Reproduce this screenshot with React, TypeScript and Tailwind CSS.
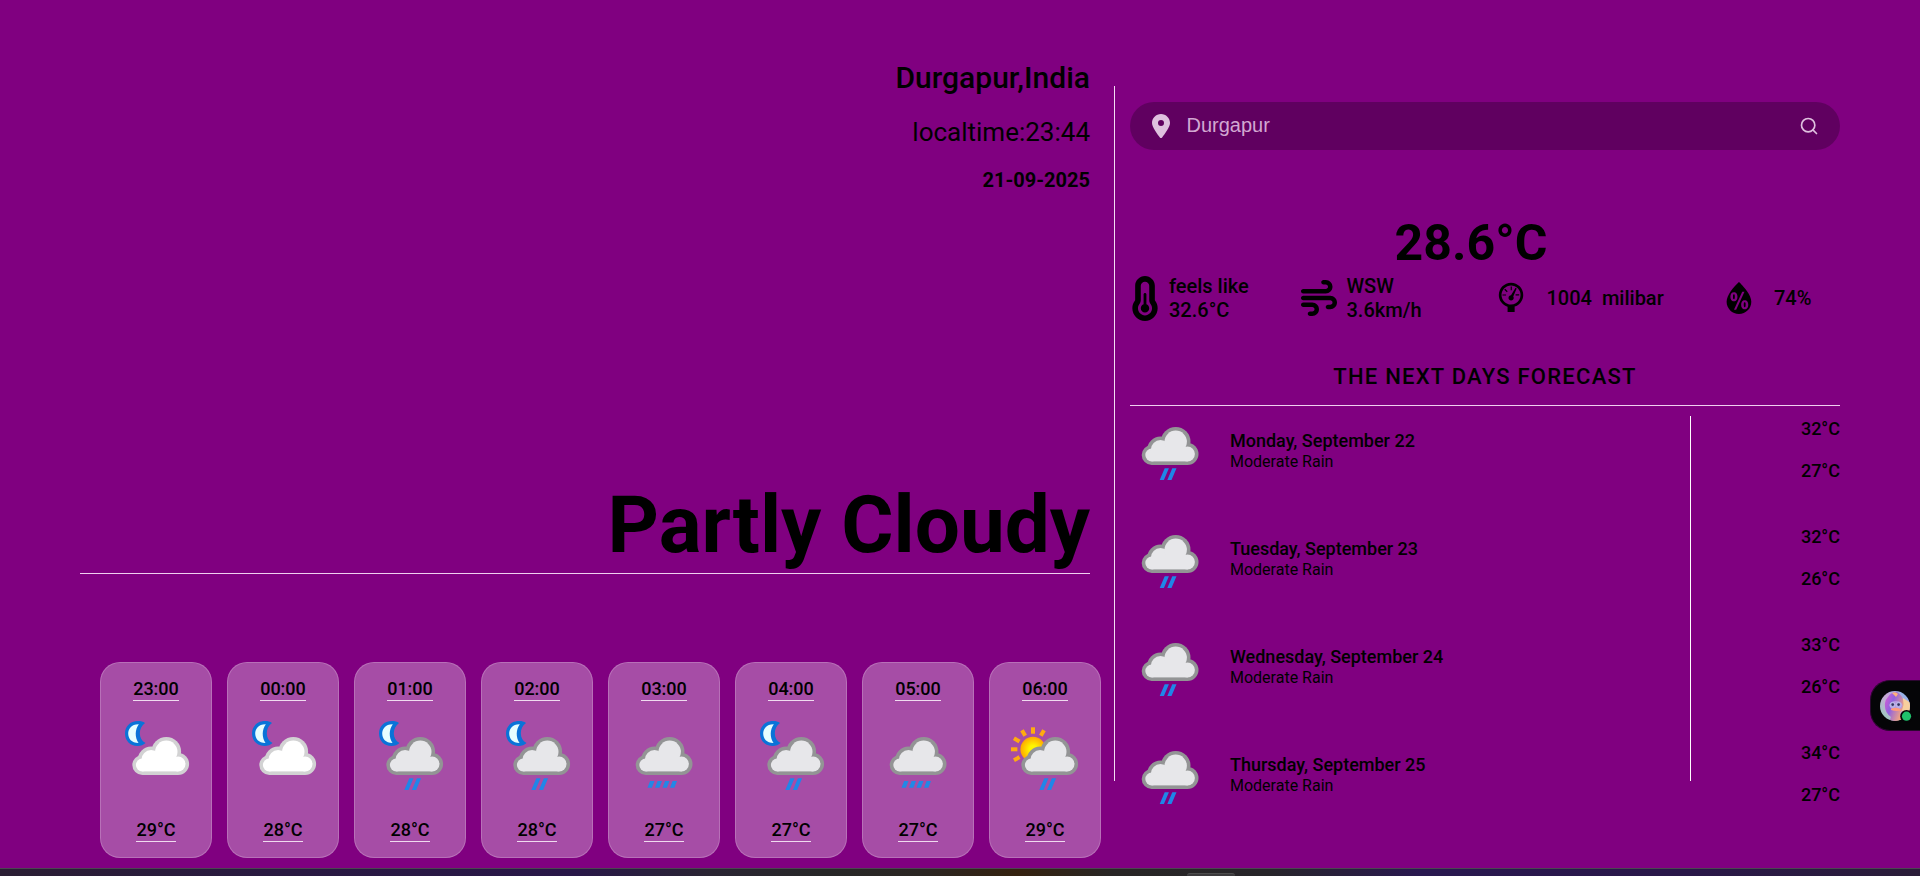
import React from "react";
import { FaLocationDot, FaTemperatureHalf, FaWind } from "react-icons/fa6";
import { WiBarometer, WiHumidity } from "react-icons/wi";
import { Search } from "lucide-react";

type Kind = "night" | "nightRain" | "lightRain" | "rain" | "dayRain";

function CloudShape({ inset, color }: { inset: number; color: string }) {
  return (
    <g fill={color}>
      <circle cx="10" cy="28" r={10 - inset} />
      <circle cx="18.8" cy="22.8" r={13.3 - inset} />
      <circle cx="34" cy="14.8" r={14.8 - inset} />
      <circle cx="45.8" cy="27" r={11 - inset} />
      <rect x="10" y="22" width="36" height={16 - inset} />
    </g>
  );
}

function WeatherIcon({ kind }: { kind: Kind }) {
  const shifted = kind !== "rain" && kind !== "lightRain";
  const clear = kind === "night";
  return (
    <svg width="80" height="72" viewBox="0 0 80 72" aria-hidden="true">
      <defs>
        <radialGradient id="sun">
          <stop offset="0.3" stopColor="#fff500" />
          <stop offset="1" stopColor="#ffa800" />
        </radialGradient>
      </defs>
      {(kind === "night" || kind === "nightRain") && (
        <g>
          <path
            fill="#0a73d8"
            d="M29 3C27 1.5 25 1 22 1C14 1 9 6.5 9 13.5C9 20.5 14 26 21.5 26C25 26 27.5 25 29.5 23C22 19 22 8 29 3Z"
          />
          <path
            fill="#e6feff"
            d="M22.8 4.2C15.5 4 12.2 9 12.2 13.5C12.2 18.5 15.5 23 22.5 23C18.8 17 18.8 10 22.8 4.2Z"
          />
        </g>
      )}
      {kind === "dayRain" && (
        <g>
          {[-120, -90, -60, -30, 0, 30].map((a) => (
            <rect
              key={a}
              x="26"
              y="7.3"
              width="4"
              height="6.4"
              fill="#ffab10"
              transform={`rotate(${a} 28 29.3)`}
            />
          ))}
          <circle cx="28" cy="29.3" r="12.6" fill="url(#sun)" />
        </g>
      )}
      <g transform={shifted ? "translate(16.3 17)" : "translate(11.7 17)"}>
        <CloudShape inset={0} color={clear ? "#d2d2d3" : "#939495"} />
        <CloudShape inset={3.6} color={clear ? "#ffffff" : "#e7e7ea"} />
        {(kind === "nightRain" || kind === "rain" || kind === "dayRain") && (
          <path
            fill="#1f86e8"
            d="M18 53L23 41.3H27.2L22.2 53ZM25.6 53L30.6 41.3H34.8L29.8 53Z"
          />
        )}
        {kind === "lightRain" && (
          <path
            fill="#2288e6"
            d="M11.8 50.7L14.4 44H18.8L16.2 50.7ZM19.3 50.7L21.9 44H26.3L23.7 50.7ZM26.8 50.7L29.4 44H33.8L31.2 50.7ZM34.3 50.7L36.9 44H41.3L38.7 50.7Z"
          />
        )}
      </g>
    </svg>
  );
}

const hours: { time: string; kind: Kind; temp: string }[] = [
  { time: "23:00", kind: "night", temp: "29°C" },
  { time: "00:00", kind: "night", temp: "28°C" },
  { time: "01:00", kind: "nightRain", temp: "28°C" },
  { time: "02:00", kind: "nightRain", temp: "28°C" },
  { time: "03:00", kind: "lightRain", temp: "27°C" },
  { time: "04:00", kind: "nightRain", temp: "27°C" },
  { time: "05:00", kind: "lightRain", temp: "27°C" },
  { time: "06:00", kind: "dayRain", temp: "29°C" },
];

const days = [
  { day: "Monday, September 22", text: "Moderate Rain", max: "32°C", min: "27°C" },
  { day: "Tuesday, September 23", text: "Moderate Rain", max: "32°C", min: "26°C" },
  { day: "Wednesday, September 24", text: "Moderate Rain", max: "33°C", min: "26°C" },
  { day: "Thursday, September 25", text: "Moderate Rain", max: "34°C", min: "27°C" },
];

function CurrentPanel() {
  return (
    <section className="flex w-[1021px] flex-col">
      <div className="flex w-[1010px] flex-col items-end border-b border-[#f0d0f0]">
        <h2 className="mt-[60px] text-[30px] leading-[35px] font-medium">Durgapur,India</h2>
        <p className="mt-[21px] text-[26px] leading-8">localtime:23:44</p>
        <p className="mt-5 text-[20px] leading-6 font-bold">21-09-2025</p>
        <h1 className="mt-[286px] pb-px text-[80px] leading-[94px] font-bold">Partly Cloudy</h1>
      </div>
      <div className="mt-[88px] ml-5 flex gap-[15px]">
        {hours.map((h) => (
          <div
            key={h.time}
            className="flex h-[196px] w-28 flex-col items-center rounded-[20px] border border-white/20 bg-white/30 pt-[15px] text-[18px] leading-[22px] font-medium"
          >
            <span className="border-b border-[#f0dcf0]">{h.time}</span>
            <div className="mt-[19px]">
              <WeatherIcon kind={h.kind} />
            </div>
            <span className="mt-[27px] border-b border-[#f0dcf0]">{h.temp}</span>
          </div>
        ))}
      </div>
    </section>
  );
}

function Metrics() {
  return (
    <div className="flex h-12 items-center text-[20px] leading-6 font-medium">
      <div className="flex w-[169px] items-center">
        <FaTemperatureHalf className="h-[45px] w-[30px]" />
        <p className="ml-[9px]">
          feels like
          <br />
          32.6°C
        </p>
      </div>
      <div className="flex w-[186px] items-center">
        <FaWind className="ml-[2px] size-9" />
        <p className="ml-[9.5px]">
          WSW
          <br />
          3.6km/h
        </p>
      </div>
      <div className="flex w-[216px] items-center">
        <WiBarometer className="ml-px size-[50px]" />
        <p className="ml-[10.5px] whitespace-pre">1004  milibar</p>
      </div>
      <div className="flex items-center">
        <WiHumidity className="ml-[13px] size-[50px]" />
        <p className="ml-[10px]">74%</p>
      </div>
    </div>
  );
}

function ForecastPanel() {
  return (
    <section className="ml-[15px] flex w-[710px] flex-col">
      <div className="mt-[102px] flex h-12 items-center rounded-full bg-black/25 pr-[21px] pl-[22px] text-[#dfc0df]">
        <FaLocationDot className="h-6 w-[18px]" />
        <span className="mb-[2px] ml-[16.5px] grow font-['Liberation_Sans',sans-serif] text-[20px] leading-6 text-[#d2a8d2]">
          Durgapur
        </span>
        <Search className="mb-px size-5" strokeWidth={2} />
      </div>
      <p className="mt-[63px] mr-[28px] text-center text-[50px] leading-[60px] font-bold">28.6°C</p>
      <div className="mt-px">
        <Metrics />
      </div>
      <h3 className="mt-[42px] border-b border-[#f0d0f0] pb-[15px] text-center text-[22px] leading-[26px] font-medium tracking-[1.25px]">
        THE NEXT DAYS FORECAST
      </h3>
      <div className="flex pt-1">
        <ul className="flex w-[560px] flex-col">
          {days.map((d) => (
            <li key={d.day} className="flex h-[108px] items-start">
              <WeatherIcon kind="rain" />
              <div className="mt-5 ml-5">
                <p className="text-[18px] leading-[22px] font-medium">{d.day}</p>
                <p className="text-[16px] leading-[19px]">{d.text}</p>
              </div>
            </li>
          ))}
        </ul>
        <div className="mt-[6px] h-[365px] w-px bg-white" />
        <ul className="flex grow flex-col text-right text-[18px] leading-[21px] font-medium">
          {days.map((d) => (
            <li key={d.day} className="flex h-[108px] flex-col gap-[21px] pt-2">
              <span>{d.max}</span>
              <span>{d.min}</span>
            </li>
          ))}
        </ul>
      </div>
    </section>
  );
}

function AssistantTab() {
  return (
    <div className="absolute top-[680px] right-0 flex h-[51px] w-[50px] items-center rounded-l-[20px] border border-r-0 border-[#2c0630] bg-[#050507] pl-[9px]">
      <svg width="34" height="34" viewBox="0 0 34 34" aria-hidden="true">
        <defs>
          <linearGradient id="sky" x1="0" y1="1" x2="1" y2="0">
            <stop offset="0" stopColor="#8fd6b8" />
            <stop offset="0.5" stopColor="#c9a6d8" />
            <stop offset="0.8" stopColor="#8fb4ea" />
            <stop offset="1" stopColor="#f3c99a" />
          </linearGradient>
          <linearGradient id="hood" x1="0" y1="0" x2="1" y2="0.6">
            <stop offset="0" stopColor="#e25bd0" />
            <stop offset="0.45" stopColor="#8f62e0" />
            <stop offset="1" stopColor="#f6a77c" />
          </linearGradient>
          <clipPath id="face">
            <circle cx="15" cy="17" r="15" />
          </clipPath>
        </defs>
        <g clipPath="url(#face)">
          <rect width="34" height="34" fill="url(#sky)" />
          <path d="M23 9L31 14V27L22 24Z" fill="#f7cf9d" />
          <path d="M8 8Q11 3 17 3Q24 7 23.5 16Q22 22 20 24L22 33H9L11 28Q4 23 5 14Q5 11 8 8Z" fill="url(#hood)" />
          <path d="M12 4Q16 2 18 5L16 8Z" fill="#ffb07b" />
          <ellipse cx="16" cy="16.5" rx="6.5" ry="4.5" fill="#b79be0" />
          <path d="M11 20Q16 17 22 21Q17 23 11 21Z" fill="#ff9b7d" />
          <circle cx="12.5" cy="15.8" r="2.5" fill="#a9a3df" stroke="#c8ccf0" strokeWidth="0.6" />
          <circle cx="18.7" cy="15.8" r="2.5" fill="#a9a3df" stroke="#c8ccf0" strokeWidth="0.6" />
          <circle cx="12.7" cy="15.6" r="1.3" fill="#35325e" />
          <circle cx="18.6" cy="15.6" r="1.3" fill="#35325e" />
        </g>
        <circle cx="26.5" cy="27.2" r="6.3" fill="#050507" />
        <circle cx="26.5" cy="27.2" r="4.6" fill="#1fc16b" />
      </svg>
    </div>
  );
}

export default function App() {
  return (
    <div className="relative flex h-[876px] w-[1920px] flex-col overflow-hidden bg-[#800080] font-[Roboto,sans-serif] text-black">
      <main className="flex h-[868px] pl-20">
        <CurrentPanel />
        <div className="mt-[86px] ml-[13px] h-[695px] w-px bg-[#f3dcf3]" />
        <ForecastPanel />
      </main>
      <footer className="flex h-2 flex-col items-start justify-end border-t border-[#4b4650] bg-[linear-gradient(90deg,#2a1e33_0%,#291941_15%,#281748_30%,#2a2533_37%,#272727_43%,#2b2623_48%,#35220f_53%,#282625_58%,#272529_66%,#291850_74%,#291748_88%,#2a1d38_100%)]">
        <div className="ml-[1187px] h-[3px] w-12 rounded-t-[3px] border-t border-[#4d4d4d] bg-[#3b3a3c]" />
      </footer>
      <AssistantTab />
    </div>
  );
}
